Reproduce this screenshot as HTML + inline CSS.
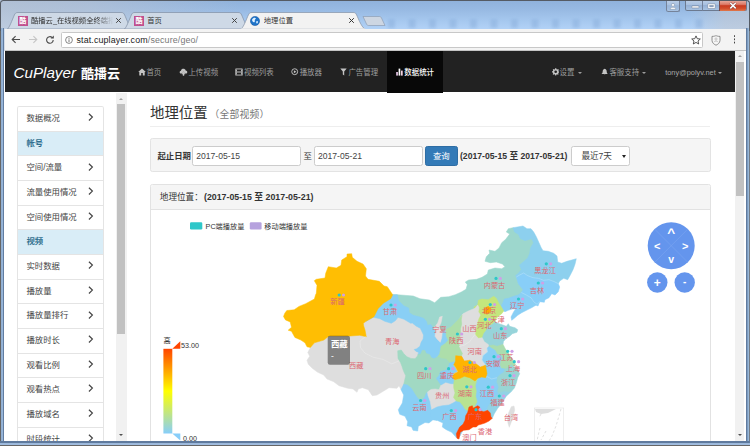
<!DOCTYPE html>
<html lang="zh-CN">
<head>
<meta charset="utf-8">
<title>地理位置</title>
<style>
*{box-sizing:border-box;margin:0;padding:0}
html,body{width:750px;height:446px;overflow:hidden;background:#fff}
body{font-family:"Liberation Sans","Noto Sans CJK SC",sans-serif;font-size:8.4px;color:#333;position:relative}
.abs{position:absolute}
#win{position:absolute;left:0;top:0;width:750px;height:446px;overflow:hidden;background:#fff}
#ftop{position:absolute;left:0;top:0;width:750px;height:51px;background:linear-gradient(180deg,#8fb1db 0px,#98bae3 10px,#a5c7ee 20px,#b1d1f6 28.5px,#9db9dc 29px,#8aa3c6 51px)}
#ftop:after{content:"";position:absolute;left:0;top:0;width:240px;height:29px;background:linear-gradient(90deg,rgba(196,200,208,.62) 0,rgba(196,200,208,.5) 90px,rgba(196,200,208,0) 240px)}
#ftop:before{content:"";position:absolute;right:0;top:0;width:60px;height:51px;background:linear-gradient(90deg,rgba(196,200,208,0) 0,rgba(196,200,208,.55) 35px,rgba(196,200,208,.6) 60px)}
#fl{position:absolute;left:0;top:28px;width:4.3px;height:418px;background:linear-gradient(90deg,#666 0,#666 .7px,#8faed2 1.2px,#97b5d8 2.5px,#627da1 3.1px,#5f7a9e 4.3px)}
#fr{position:absolute;left:745.7px;top:28px;width:4.3px;height:418px;background:linear-gradient(90deg,#5f7a9e 0,#627da1 1.2px,#8fb0d3 1.7px,#a0bfe0 3.2px,#666 3.6px,#666 4.3px)}
#fb{position:absolute;left:0;top:441.3px;width:750px;height:4.7px;background:linear-gradient(180deg,#5f7a9e 0,#5f7a9e 1.9px,#9ab7d9 2.3px,#a0bce0 3.5px,#666 3.8px,#666 4.7px)}
#win:before{content:"";position:absolute;left:0;top:0;right:0;height:30px;border:0.8px solid #555b64;border-bottom:none;border-radius:3.5px 3.5px 0 0;z-index:50;pointer-events:none}
/* tabs */
.tab{position:absolute;top:12px;height:17px}
.tab svg{position:absolute;left:0;top:0}
.tabt{position:absolute;top:15.5px;font-size:7.3px;color:#333;white-space:nowrap;line-height:10px;overflow:hidden}
.tabx{position:absolute;top:16.5px;width:7px;height:7px}
.fav{position:absolute;top:16px;width:9.5px;height:9.5px;background:#c0508e;color:#fff;font-size:7px;line-height:9.5px;text-align:center;overflow:hidden;font-weight:bold}
/* toolbar */
#toolbar{position:absolute;left:5px;top:28.5px;width:740.7px;box-shadow:-0.7px 0 0 #f3f3f3;height:22.5px;background:#f3f3f3;border-bottom:0.8px solid #c4c4c4}
#url{position:absolute;left:56px;top:3px;width:642.3px;height:16px;background:#fff;border:1px solid #c8c8c8;border-radius:1.5px}
#urlt{position:absolute;left:71.5px;top:5px;font-size:8.9px;line-height:12px;color:#222;white-space:nowrap;letter-spacing:0.13px}
#urlt span{color:#777}
/* page */
#page{position:absolute;left:5px;top:51px;width:740.7px;height:390.3px;background:#fff;box-shadow:-1px 0 0 #fff}
#pclip{position:absolute;left:-0.7px;top:0;width:741.4px;height:390.3px;overflow:hidden}
#pin{position:absolute;left:0.7px;top:0;width:740.7px;height:390.3px}
#nav{position:absolute;left:0;top:0.3px;width:730px;height:41.2px;background:#222}
#nav .act{position:absolute;left:382.3px;top:0;width:56px;height:42px;background:#080808}
.ni{position:absolute;top:15.3px;font-size:7.45px;line-height:12px;color:#9d9d9d;white-space:nowrap}
.ni.w{color:#fff;font-weight:500}
.nic{position:absolute;top:17px}
#logo{position:absolute;left:8.5px;top:9.5px;color:#fff;white-space:nowrap;line-height:24px}
#logo i{font-size:15.2px;font-style:italic;letter-spacing:0px}
#logo b{font-size:13px;margin-left:5px;font-weight:bold;position:relative;top:-0.3px}
/* scrollbars */
#vs{position:absolute;left:730px;top:0;width:9px;height:390.5px;background:#f1f1f1}
#vs .th{position:absolute;left:1.3px;top:10.8px;width:7.5px;height:134.5px;background:#c1c1c1}
#ss{position:absolute;left:111.3px;top:42px;width:10.6px;height:348.5px;background:#f1f1f1}
#ss .th{position:absolute;left:0.8px;top:11px;width:8.1px;height:229.8px;background:#c1c1c1}
.arr{position:absolute;width:0;height:0;border-left:2.5px solid transparent;border-right:2.5px solid transparent}
.arr.up{border-bottom:2.6px solid #a0a0a0}
.arr.dn{border-top:2.6px solid #505050}
/* sidebar */
#side{position:absolute;left:11.8px;top:55.2px;width:87.2px;border:0.6px solid #e4e4e4;border-bottom:none;border-radius:2.4px 2.4px 0 0;background:#fff}
#side div{height:24.65px;border-bottom:0.6px solid #e4e4e4;padding-left:8.6px;line-height:23.7px;font-size:8.4px;color:#444;position:relative;white-space:nowrap}
#side div.h{background:#d9edf7;color:#31708f;font-weight:bold}
#side div svg{position:absolute;left:70.6px;top:6.2px;width:5.5px;height:8.2px}
/* main */
#h3{position:absolute;left:145px;top:52.4px;font-size:14.4px;line-height:20px;color:#333;white-space:nowrap}
#h3 small{font-size:9.8px;color:#777;margin-left:2px;letter-spacing:0.2px}
#hr{position:absolute;left:145px;top:75px;width:560px;height:0.7px;background:#eee}
#well{position:absolute;left:145px;top:87.4px;width:560.6px;height:33.6px;background:#f5f5f5;border:0.6px solid #e3e3e3;border-radius:2.4px}
.inp{position:absolute;top:6.2px;height:20.4px;background:#fff;border:0.6px solid #ccc;border-radius:2.4px;font-size:8.6px;line-height:19.5px;padding-left:2.8px;color:#444;white-space:nowrap}
.lb{position:absolute;top:6.2px;line-height:20px;font-size:8.4px;white-space:nowrap}
#btn{position:absolute;left:273.8px;top:6.2px;width:33px;height:20.4px;background:#337ab7;border:0.6px solid #2e6da4;border-radius:2.4px;color:#fff;font-size:8.4px;line-height:19px;text-align:center}
#panel{position:absolute;left:145px;top:133px;width:560.6px;height:300px;border:0.6px solid #e2e2e2;border-radius:2.4px;background:#fff}
#ph{position:absolute;left:0;top:0;width:100%;height:24.6px;background:#f5f5f5;border-bottom:0.6px solid #e2e2e2;border-radius:2.4px 2.4px 0 0;padding-left:8.8px;line-height:24px;font-size:8.6px;white-space:nowrap}
#ph b{font-size:8.8px;margin-left:-1.2px}
#map{position:absolute;left:0;top:0}
</style>
</head>
<body>
<div id="win">
<div id="ftop"></div><div id="fl"></div><div id="fr"></div><div id="fb"></div>
<!-- window buttons -->
<div class="abs" style="left:663px;top:0;width:87px;height:12.5px;z-index:5">
 <div class="abs" style="left:2.7px;top:0;width:14px;height:11.6px;border:0.7px solid #75839a;border-top:none;border-radius:0 0 2.5px 2.5px;background:linear-gradient(#bccfe8,#a9c1e0 45%,#9ab5d8 52%,#a9c4e4)"></div>
 <svg class="abs" style="left:5.7px;top:2.6px" width="8" height="7" viewBox="0 0 8 7"><circle cx="4" cy="1.9" r="1.5" fill="#fff" stroke="#6a7890" stroke-width=".4"/><path d="M1.1 6.3c0-2.6 5.8-2.6 5.8 0z" fill="#fff" stroke="#6a7890" stroke-width=".4"/></svg>
 <div class="abs" style="left:22.3px;top:0;width:61.7px;height:11.3px;border:0.7px solid #6c7a90;border-top:none;border-radius:0 0 2.5px 2.5px;background:linear-gradient(#bccfe8,#a9c1e0 45%,#95b0d4 52%,#a7c2e2)"></div>
 <div class="abs" style="left:39px;top:0;width:0.7px;height:11px;background:#73819a"></div>
 <div class="abs" style="left:55.7px;top:0;width:27.8px;height:10.8px;border-left:0.7px solid #7a4a48;border-radius:0 0 2.5px 0;background:linear-gradient(#e9b3a8,#dc7a68 40%,#c93a20 52%,#d4502e 80%,#e07a4c)"></div>
 <svg class="abs" style="left:27.5px;top:5.4px" width="9" height="4" viewBox="0 0 9 4"><rect x=".9" y=".9" width="7" height="2" rx=".5" fill="#fff" stroke="#66748c" stroke-width=".5"/></svg>
 <svg class="abs" style="left:43.5px;top:2.8px" width="9" height="7" viewBox="0 0 9 7"><rect x=".8" y=".8" width="7.4" height="4.8" rx=".6" fill="#fff" stroke="#66748c" stroke-width=".5"/><rect x="2.8" y="2.4" width="3.4" height="1.5" fill="#8eaad0" stroke="#66748c" stroke-width=".4"/></svg>
 <svg class="abs" style="left:66px;top:2.4px" width="8" height="7.4" viewBox="0 0 8 7.4"><path d="M1.3 1l5.4 5.4M6.7 1L1.3 6.4" stroke="#6a3a38" stroke-width="2.3"/><path d="M1.3 1l5.4 5.4M6.7 1L1.3 6.4" stroke="#fff" stroke-width="1.5"/></svg>
</div>
<!-- blurred aero blobs -->
<div class="abs" style="left:380px;top:19px;width:330px;height:9px;opacity:.55;filter:blur(1.6px);background:repeating-linear-gradient(90deg,rgba(140,175,220,0) 0px,rgba(140,175,220,0) 7px,#8cb0dc 9px,#8cb0dc 14px,rgba(140,175,220,0) 16px,rgba(140,175,220,0) 20.5px)"></div>
<!-- tab 1 -->
<div class="tab" style="left:7px;width:126px"><svg width="126" height="17" viewBox="0 0 126 17"><path d="M0.5 17C3 15 6.5 4 8 1.8C8.8 0.8 9.5 0.5 11 0.5H114C115.5 0.5 116.3 0.8 117 1.8C118.5 4 122 15 125 17Z" fill="#ced9e6" stroke="#7f8ea3" stroke-width=".7"/></svg></div>
<div class="fav" style="left:18px">酷</div>
<div class="tabt" style="left:31px;width:82px;-webkit-mask-image:linear-gradient(90deg,#000 80%,transparent)">酷播云_在线视频全终端播放</div>
<svg class="tabx" style="left:115px" viewBox="0 0 7 7"><path d="M1.2 1.2l4.6 4.6M5.8 1.2L1.2 5.8" stroke="#444" stroke-width="1"/></svg>
<!-- tab 2 -->
<div class="tab" style="left:124px;width:126px"><svg width="126" height="17" viewBox="0 0 126 17"><path d="M0.5 17C3 15 6.5 4 8 1.8C8.8 0.8 9.5 0.5 11 0.5H114C115.5 0.5 116.3 0.8 117 1.8C118.5 4 122 15 125 17Z" fill="#ced9e6" stroke="#7f8ea3" stroke-width=".7"/></svg></div>
<div class="fav" style="left:134.3px">酷</div>
<div class="tabt" style="left:147.3px">首页</div>
<svg class="tabx" style="left:231px" viewBox="0 0 7 7"><path d="M1.2 1.2l4.6 4.6M5.8 1.2L1.2 5.8" stroke="#444" stroke-width="1"/></svg>
<!-- new tab btn -->
<svg class="abs" style="left:362px;top:15.5px" width="24" height="10" viewBox="0 0 24 10"><path d="M1 .5H17.5C18.5 .5 19 1 19.5 2L23 9.5H6.5C5.5 9.5 5 9 4.5 8Z" fill="#cdd6e2" stroke="#8e9db3" stroke-width=".7"/></svg>
<!-- tab 3 active -->
<div class="tab" style="left:240.5px;width:124px"><svg width="124" height="17" viewBox="0 0 124 17"><path d="M0 17C3 15 6.5 4 8 1.8C8.8 0.8 9.5 0.5 11 0.5H112C113.5 0.5 114.3 0.8 115 1.8C116.5 4 120 15 124 17Z" fill="#f2f2f2" stroke="#8492a6" stroke-width=".7"/><rect x="0" y="16.4" width="124" height="1" fill="#f2f2f2"/></svg></div>
<svg class="abs" style="left:250.3px;top:15.8px" width="10" height="10" viewBox="0 0 10 10"><circle cx="5" cy="5" r="4.6" fill="#1e73c8"/><circle cx="5" cy="5" r="4.6" fill="none" stroke="#0f4f9a" stroke-width=".5"/><path d="M2.2 3.2C3 1.6 5 1.2 6 2.2C5.2 3.4 4.6 3.8 4.8 5C5 6.2 4 6.6 3.2 6C2.4 5.4 1.8 4.4 2.2 3.2Z" fill="#dff0ff"/><path d="M6.4 5.2C7.4 4.6 8.4 5.4 8 6.6C7.6 7.6 6.6 7.8 6.2 7C6 6.4 6 5.6 6.4 5.2Z" fill="#bfe0ff"/></svg>
<div class="tabt" style="left:263.8px">地理位置</div>
<svg class="tabx" style="left:347.5px" viewBox="0 0 7 7"><path d="M1.2 1.2l4.6 4.6M5.8 1.2L1.2 5.8" stroke="#333" stroke-width="1"/></svg>

<div id="toolbar">
 <svg class="abs" style="left:5.8px;top:6.5px" width="10" height="9" viewBox="0 0 10 9"><path d="M9 4.5H1.4M4.6 1.1L1.2 4.5L4.6 7.9" fill="none" stroke="#4a4a4a" stroke-width="1.1"/></svg>
 <svg class="abs" style="left:23px;top:6.5px" width="10" height="9" viewBox="0 0 10 9"><path d="M1 4.5H8.6M5.4 1.1L8.8 4.5L5.4 7.9" fill="none" stroke="#c6c6c6" stroke-width="1.1"/></svg>
 <svg class="abs" style="left:39.5px;top:6px" width="10" height="10" viewBox="0 0 10 10"><path d="M8.2 5A3.3 3.3 0 1 1 7.2 2.6" fill="none" stroke="#4a4a4a" stroke-width="1.1"/><path d="M5.6 3.6H8.8V0.6Z" fill="#4a4a4a"/></svg>
 <div id="url"></div>
 <svg class="abs" style="left:59.5px;top:7px" width="8" height="8" viewBox="0 0 8 8"><circle cx="4" cy="4" r="3.4" fill="none" stroke="#555" stroke-width=".7"/><path d="M4 3.4V6M4 2V2.8" stroke="#555" stroke-width=".8"/></svg>
 <div id="urlt">stat.cuplayer.com<span>/secure/geo/</span></div>
 <svg class="abs" style="left:685.7px;top:6px" width="10" height="10" viewBox="0 0 10 10"><path d="M5 .9L6.25 3.7L9.3 4L7 6L7.7 9L5 7.4L2.3 9L3 6L.7 4L3.75 3.7Z" fill="none" stroke="#444" stroke-width=".9" stroke-linejoin="round"/></svg>
 <svg class="abs" style="left:705.7px;top:6px" width="10" height="11" viewBox="0 0 10 11"><path d="M1 1.4C3.5 1.4 4.5 .8 5 .6C5.5 .8 6.5 1.4 9 1.4V5.4C9 8 6.5 9.6 5 10.2C3.5 9.6 1 8 1 5.4Z" fill="#f6f6f6" stroke="#777" stroke-width=".8"/><circle cx="5" cy="4" r="1.1" fill="none" stroke="#999" stroke-width=".5"/><path d="M3 7.2C3.4 5.6 6.6 5.6 7 7.2" fill="none" stroke="#999" stroke-width=".5"/></svg>
 <div class="abs" style="left:728.7px;top:6.5px;width:1.6px;height:1.6px;background:#444;border-radius:50%;box-shadow:0 3.3px 0 #444,0 6.6px 0 #444"></div>
</div>

<div id="page"><div id="pclip"><div id="pin">
<div id="nav">
 <div class="act"></div>
 <div id="logo"><i>CuPlayer</i><b>酷播云</b></div>
 <svg class="nic" style="left:133px;top:16.8px" width="8" height="8" viewBox="0 0 8 8"><path d="M4 .6L.2 4H1.3V7.4H3.2V5H4.8V7.4H6.7V4H7.8Z" fill="#c4c4c4"/></svg>
 <div class="ni" style="left:141.4px">首页</div>
 <svg class="nic" style="left:173.5px;top:16.8px" width="9" height="8" viewBox="0 0 9 8"><path d="M2.2 5.6C.2 5.6 .2 3 2 2.8C2.2 .4 6 .2 6.6 2.4C8.8 2.4 8.8 5.6 6.8 5.6H5.6L4.5 3.4L3.4 5.6Z" fill="#c4c4c4"/><path d="M4.5 3.6L2.6 6.2H3.8V7.8H5.2V6.2H6.4Z" fill="#c4c4c4"/></svg>
 <div class="ni" style="left:183.4px">上传视频</div>
 <svg class="nic" style="left:229.7px;top:17px" width="8" height="8" viewBox="0 0 8 8"><rect x=".3" y=".5" width="7.4" height="7" rx=".6" fill="#c4c4c4"/><rect x="2" y="1.4" width="4" height="2.1" fill="#222"/><rect x="2" y="4.5" width="4" height="2.1" fill="#222"/><rect x=".9" y="1.3" width=".6" height=".9" fill="#222"/><rect x=".9" y="3.5" width=".6" height=".9" fill="#222"/><rect x=".9" y="5.7" width=".6" height=".9" fill="#222"/><rect x="6.5" y="1.3" width=".6" height=".9" fill="#222"/><rect x="6.5" y="3.5" width=".6" height=".9" fill="#222"/><rect x="6.5" y="5.7" width=".6" height=".9" fill="#222"/></svg>
 <div class="ni" style="left:239px">视频列表</div>
 <svg class="nic" style="left:286.2px;top:17.2px" width="7.4" height="7.4" viewBox="0 0 8 8"><circle cx="4" cy="4" r="3.2" fill="none" stroke="#c4c4c4" stroke-width="1"/><path d="M3.1 2.4L5.8 4L3.1 5.6Z" fill="#c4c4c4"/></svg>
 <div class="ni" style="left:294.7px">播放器</div>
 <svg class="nic" style="left:335.3px;top:17px" width="7" height="8" viewBox="0 0 7 8"><path d="M.3 .5H6.7L4.2 3.6V7.6L2.8 6.6V3.6Z" fill="#c4c4c4"/></svg>
 <div class="ni" style="left:343.4px">广告管理</div>
 <svg class="nic" style="left:391.3px;top:17px" width="7" height="8" viewBox="0 0 7 8"><rect x=".2" y="4" width="1.7" height="3.6" fill="#e8c8e8"/><rect x="2.6" y=".6" width="1.7" height="7" fill="#fff"/><rect x="5" y="2.6" width="1.7" height="5" fill="#f4d0e0"/></svg>
 <div class="ni w" style="left:399.3px">数据统计</div>
 <svg class="nic" style="left:546.6px;top:17px" width="7.4" height="7.4" viewBox="0 0 10 10"><path d="M4.2 .3H5.8L6.1 1.6L7.1 2.1L8.3 1.4L9.3 2.6L8.6 3.7L8.9 4.6L10 5V6L8.9 6.3L8.4 7.3L9 8.4L7.9 9.3L6.9 8.6L6 8.9L5.6 10H4.4L4 8.9L3.1 8.6L2 9.3L.9 8.3L1.6 7.2L1.2 6.3L0 5.9V4.6L1.2 4.2L1.6 3.4L1 2.3L2.1 1.3L3.1 2L3.9 1.6Z" fill="#c4c4c4"/><circle cx="5" cy="5.1" r="1.8" fill="#222"/></svg>
 <div class="ni" style="left:554.6px">设置</div>
 <div class="arr dn" style="left:572.9px;top:20.6px;border-top-color:#9d9d9d;border-width:2.4px 2.2px 0 2.2px"></div>
 <svg class="nic" style="left:595.8px;top:16.8px" width="7.4" height="8" viewBox="0 0 8 8"><path d="M4 .4C5.8 .8 6.2 2.2 6.2 3.6C6.2 5 7 5.6 7.7 6.2H.3C1 5.6 1.8 5 1.8 3.6C1.8 2.2 2.2 .8 4 .4Z" fill="#c4c4c4"/><path d="M3.2 6.6A.9 .9 0 0 0 4.8 6.6Z" fill="#c4c4c4"/></svg>
 <div class="ni" style="left:604.4px">客服支持</div>
 <div class="arr dn" style="left:637.2px;top:20.6px;border-top-color:#9d9d9d;border-width:2.4px 2.2px 0 2.2px"></div>
 <div class="ni" style="left:660.2px;font-size:7.4px;color:#a8a8a8">tony@polyv.net</div>
 <div class="arr dn" style="left:713px;top:20.6px;border-top-color:#9d9d9d;border-width:2.4px 2.2px 0 2.2px"></div>
</div>
<div id="vs"><div class="arr up" style="left:3px;top:4px"></div><div class="th"></div><div class="arr dn" style="left:3px;top:383px"></div></div>
<div id="ss"><div class="arr up" style="left:2.4px;top:5px"></div><div class="th"></div><div class="arr dn" style="left:2.4px;top:340.5px"></div></div>
<div id="side">
 <div>数据概况<svg width="6" height="9" viewBox="0 0 6 9"><path d="M1 .8L4.8 4.5L1 8.2" fill="none" stroke="#444" stroke-width="1.3"/></svg></div>
 <div class="h">帐号</div>
 <div>空间/流量<svg width="6" height="9" viewBox="0 0 6 9"><path d="M1 .8L4.8 4.5L1 8.2" fill="none" stroke="#444" stroke-width="1.3"/></svg></div>
 <div>流量使用情况<svg width="6" height="9" viewBox="0 0 6 9"><path d="M1 .8L4.8 4.5L1 8.2" fill="none" stroke="#444" stroke-width="1.3"/></svg></div>
 <div>空间使用情况<svg width="6" height="9" viewBox="0 0 6 9"><path d="M1 .8L4.8 4.5L1 8.2" fill="none" stroke="#444" stroke-width="1.3"/></svg></div>
 <div class="h">视频</div>
 <div>实时数据<svg width="6" height="9" viewBox="0 0 6 9"><path d="M1 .8L4.8 4.5L1 8.2" fill="none" stroke="#444" stroke-width="1.3"/></svg></div>
 <div>播放量<svg width="6" height="9" viewBox="0 0 6 9"><path d="M1 .8L4.8 4.5L1 8.2" fill="none" stroke="#444" stroke-width="1.3"/></svg></div>
 <div>播放量排行<svg width="6" height="9" viewBox="0 0 6 9"><path d="M1 .8L4.8 4.5L1 8.2" fill="none" stroke="#444" stroke-width="1.3"/></svg></div>
 <div>播放时长<svg width="6" height="9" viewBox="0 0 6 9"><path d="M1 .8L4.8 4.5L1 8.2" fill="none" stroke="#444" stroke-width="1.3"/></svg></div>
 <div>观看比例<svg width="6" height="9" viewBox="0 0 6 9"><path d="M1 .8L4.8 4.5L1 8.2" fill="none" stroke="#444" stroke-width="1.3"/></svg></div>
 <div>观看热点<svg width="6" height="9" viewBox="0 0 6 9"><path d="M1 .8L4.8 4.5L1 8.2" fill="none" stroke="#444" stroke-width="1.3"/></svg></div>
 <div>播放域名<svg width="6" height="9" viewBox="0 0 6 9"><path d="M1 .8L4.8 4.5L1 8.2" fill="none" stroke="#444" stroke-width="1.3"/></svg></div>
 <div>时段统计<svg width="6" height="9" viewBox="0 0 6 9"><path d="M1 .8L4.8 4.5L1 8.2" fill="none" stroke="#444" stroke-width="1.3"/></svg></div>
</div>
<div id="h3">地理位置<small>（全部视频）</small></div>
<div id="hr"></div>
<div id="well">
 <div class="lb" style="left:6.4px;font-weight:bold">起止日期</div>
 <div class="inp" style="left:41.4px;width:108.6px">2017-05-15</div>
 <div class="lb" style="left:152.6px">至</div>
 <div class="inp" style="left:163.2px;width:109px">2017-05-21</div>
 <div id="btn">查询</div>
 <div class="lb" style="left:309px;font-weight:bold;font-size:8.65px">(2017-05-15 至 2017-05-21)</div>
 <div class="inp" style="left:420.4px;width:58.5px;padding-left:9px">最近7天<div class="arr dn" style="left:49.4px;top:8px;border-top-color:#222;border-width:3.4px 2.1px 0 2.1px"></div></div>
</div>
<div id="panel">
 <div id="ph">地理位置： <b>(2017-05-15 至 2017-05-21)</b></div>
</div>
<svg id="map" class="abs" style="left:-5px;top:-51px" width="750" height="446" viewBox="0 0 750 446" font-family="Liberation Sans,Noto Sans CJK SC,sans-serif">
<!-- legend -->
<rect x="190" y="222.2" width="12.3" height="7.2" rx="1.2" fill="#2ec7c9"/>
<text x="205.6" y="228.6" font-size="7.2" fill="#333">PC端播放量</text>
<rect x="249.8" y="222.2" width="11.8" height="7.2" rx="1.2" fill="#b6a2de"/>
<text x="264.3" y="228.6" font-size="7.2" fill="#333">移动端播放量</text>
<!-- data range -->
<defs><linearGradient id="dr" x1="0" y1="0" x2="0" y2="1"><stop offset="0" stop-color="#ff4500"/><stop offset=".5" stop-color="#ffff00"/><stop offset="1" stop-color="#87cefa"/></linearGradient></defs>
<rect x="163.4" y="348.8" width="8.9" height="84.7" fill="url(#dr)"/>
<path d="M172.3 348.8H180.3V341.3Z" fill="#ff4500"/>
<path d="M172.3 433.5H180.3V440.5Z" fill="#87cefa"/>
<text x="163.6" y="343.4" font-size="7.2" fill="#333">高</text>
<text x="181" y="348" font-size="7.2" fill="#333">53.00</text>
<text x="183" y="441" font-size="7.2" fill="#333">0.00</text>
<!-- roam controller -->
<circle cx="671.2" cy="245.7" r="23.5" fill="#6495ed"/>
<path d="M654.6 229.1L687.8 262.3M687.8 229.1L654.6 262.3" stroke="#7aa4f0" stroke-width=".6"/>
<g font-size="11" font-weight="bold" fill="#fff" text-anchor="middle"><text x="671.2" y="237" font-size="13.5">^</text><text x="671.2" y="262.6" font-size="10.5">v</text><text x="657.3" y="249.6">&lt;</text><text x="685.1" y="249.6">&gt;</text></g>
<circle cx="657.3" cy="282.5" r="10.2" fill="#6495ed"/>
<circle cx="684.7" cy="282.5" r="10.2" fill="#6495ed"/>
<g font-size="10" font-weight="bold" fill="#fff" text-anchor="middle"><text x="657.3" y="286.6" font-size="12">+</text><text x="684.7" y="285.4">-</text></g>
<g stroke-linejoin="round">
<path d="M392.7 294.7L397.3 294.7L413.3 296L420 298.7L429.3 300L434.7 302.7L440.7 297.3L448.7 296.7L455.3 294.7L461.3 292L466 289.3L467.3 284.7L465.3 282L468.7 280L476.7 279.3L482 277.3L487.3 274L488.3 270L495 268L501.7 268.7L505 266.7L502.3 264L496.3 262L490.3 262.7L485 261.3L486.3 256.7L489.7 253.3L489 250L495 251.3L499 248L501.7 242.7L505.7 239.3L509.7 234L506.3 232L508.3 228.7L513 227.7L520 232L535 240L535 260L525 280L528 297L515 305L506 307L490 312L470 325L450 335L440 335L432 330L410 318L400 310L395 300Z" fill="#9dd7cd" stroke="#9dd7cd" stroke-width=".5"/>
<path d="M310.4 347.5L308.3 351.5L307.7 352.3L309.7 356.3L307 360.3L308.3 364.3L312.3 368.3L317.7 372.3L323.7 375L327 379L333.7 381.7L339 385.7L347.7 388.3L353 389L357 392.3L358.3 389L362.3 387.7L368.3 389.7L372.3 395.7L377 395L383.7 391L389 387.7L397 388.3L399 385.7L401 389.7L406 388L408 380L408 368L406 361L410 361L418 360L424 352L426 340L427 332L424 324L416 320.5L408 317L401 313L395 316L388 319L380 315L374 316L366 318L360 322L360 330L340 330L320 336Z" fill="#dedede" stroke="#dedede" stroke-width=".5"/>
<path d="M392.7 294.7L397.3 294.7L398.7 300.7L404 306L408.7 308L409.3 312.7L413.3 315.3L420 317L424 318.5L426.5 321.5L427.5 325.3L430.7 324.5L433.7 328.3L438 328L441 331.5L442.3 332.3L445.7 329.7L449 332L450 340L446 346L443 355L440 360L435 361L425 357L420 356L417.9 354.4L418.7 352.4L415.8 351.2L414.2 349.5L416.7 348.7L419.9 346.3L421.1 342.3L423.1 339L423.5 335L420.3 328.3L416 326L412.3 323L410.7 323.3L404 319.3L398 317.3L395.3 320.7L391.3 323.3L384.7 321.3L380 318.7L373.3 317.3L366 321.3L366 316L372 308L380 300L388 294Z" fill="#89cff5" stroke="#89cff5" stroke-width=".5"/>
<path d="M283.5 316.5L284.8 313.2L286.8 310.5L294.2 309.8L299 306.4L305.7 303.7L314.4 299L315.5 295L316.3 293.3L317 285.3L314.3 280.7L316.3 279.3L325 278L325.7 273.3L328.3 266.7L336.3 268L341 265.3L341.7 260L347 256.7L347 254L351.7 253.7L352.3 257.3L357 261.3L363 264L366.3 268.7L365.5 276L368 279.3L379.3 281.3L384 286L387.3 286.7L392.7 294.7L390.7 298.7L383.3 303.3L378 308.7L374 316.7L366 321.3L363.3 323.3L363.7 326L365 330L366.3 336.7L359.7 335.3L350.3 336L329 336L323.8 340.1L314.4 342.8L310.4 347.5L307 346.8L305 342.8L300.9 340.1L294.9 337.4L291.5 331.3L288.2 330.2L291.5 327.3L290.2 321.9L285.5 319.9Z" fill="#ffbe03" stroke="#ffbe03" stroke-width=".5"/>
<path d="M513 227.7L523 226L527 228.7L531 228.7L533.7 232L536.3 236.7L539 242.7L541 247.3L543 250.7L548.3 251.3L553.7 253.3L557 256L557.7 262L561.7 263.3L567 261.3L571.7 260L576.3 258.7L575 264.3L573 269.7L570.3 275L567.7 279.7L563.7 278.3L559.7 281L558.3 283.7L556 288L540 287L528 283L521 281L516.3 277L515.5 275.5L519 272.7L521.3 269.5L519.5 265L523.5 261.7L527.7 258L529.7 253.3L530.5 248L533.5 242.7L531.7 238.7L525 240.7L520.3 238.5L518.5 234.5L514.5 232Z" fill="#8dd0ee" stroke="#8dd0ee" stroke-width=".5"/>
<path d="M516.3 277L519.7 275L523.7 273L527.7 275.7L533 277.7L538.3 278.3L543.7 280.3L549 279.7L554.3 281.7L558.3 283.7L559.7 287L558.3 291.7L555 295L551.7 293.7L549 297.7L545 299.7L544.3 302.3L539.7 301.7L538 306L531 303L525 299L522 295.5L521.3 292.5L523 289.7L518.3 283.7Z" fill="#88cef8" stroke="#88cef8" stroke-width=".5"/>
<path d="M521.3 292.5L526.3 295L531 297.7L533.7 301.7L537 304.3L539.7 301.7L537 304.5L532 307.5L527 310L521.7 312.7L517.7 315.3L514.3 318.3L511.7 320.3L511 317L513.7 311.7L515.7 309L512.3 309L508.3 310.3L505 311.7L503.7 311L500 310L499 306L501 306.3L503 302.3L504.3 299L508.3 298.3L513.7 296.3L518.3 295Z" fill="#89cff5" stroke="#89cff5" stroke-width=".5"/>
<path d="M477.7 305L478.3 300.3L481.7 299L488.3 299.7L493.7 296.3L496.3 298.3L499 303.7L501 306.3L503.7 311L501.7 313.7L499 315.7L496.3 318.3L495 321.7L497 326L492 332L488 338L484 341L478 342L472 336L472 325L475 312L474 307Z" fill="#c3e67d" stroke="#c3e67d" stroke-width=".5"/>
<path d="M484.3 308.3L488.3 306.3L491 308.3L490.3 312.3L487 314.3L483.7 313Z" fill="#ffa800" stroke="#ffa800" stroke-width=".5"/>
<path d="M495 321.7L492.3 324.3L488.3 326.3L486.3 330.3L483.7 333.7L482.3 337.7L480 340L482 346L490 349L498 349L503 344.3L503.5 341.5L506 338.5L509.7 336.3L512.3 333.7L517 332.3L517.7 329.7L515 327.7L509.7 326.3L508.3 323.7L506.3 326.3L503 325L499 323.7Z" fill="#97d4da" stroke="#97d4da" stroke-width=".5"/>
<path d="M462 315L463 313.7L468.3 311L475 308.3L477.7 305L479 307.7L478.3 311.7L480.3 315L478.3 319L477 323.7L475.7 329L475 334.5L474 340L466 347L460 348L457 345L458 335L459 325L460 318Z" fill="#dedede" stroke="#dedede" stroke-width=".5"/>
<path d="M439.7 317L442.3 316.3L441 323L439 327L442.3 332.3L441.7 337.7L440.3 342.3L437 339L435 336.3L435.7 331L433.7 328.3L437.7 323Z" fill="#e4dede" stroke="#e4dede" stroke-width=".5"/>
<path d="M445.7 329.7L451 327L455 323L459 319L462 315L461.3 320L461.7 324L460.5 329L460.7 334L458.5 342L459.5 346.5L460.3 348.3L465 352L465 358L462 362L456 366L450 366L444 362L438 360L437.7 356.8L439.7 353.7L441 346.3L445 343.7L448.3 340.3L446.3 336.3Z" fill="#addeaa" stroke="#addeaa" stroke-width=".5"/>
<path d="M459.5 346.5L464.3 345L469.7 341.7L472.3 338L475 334.5L478.3 338.3L482.3 337.7L484.3 341.7L488.3 344.5L490 350L489 356L487 362L488 368L482 370L475 366L468 363L463 360L461.7 356.3L463 353.7L460.3 348.3Z" fill="#dedede" stroke="#dedede" stroke-width=".5"/>
<path d="M489 345.7L493 345L497 346.3L503 344.3L505 348.3L507.7 352.3L510.3 356.3L513 360.3L514.3 362.3L515.7 365L513 366.3L510 370L503 371L498 368L497 360L498 356L493 352L489 350Z" fill="#abddaf" stroke="#abddaf" stroke-width=".5"/>
<path d="M487 348.3L489 346.5L491.7 348.3L495 350.3L497 354.3L500.3 355L502.3 358.3L500.3 361L499.7 365L501 368.3L505 369L506 374L502 378L496 381L490 381L485 378L482 374L482 368L485.5 365L482 360L483 355.5L487.5 352Z" fill="#89cff5" stroke="#89cff5" stroke-width=".5"/>
<path d="M403.7 384.3L405.7 375.7L403.3 370.5L402 366.5L400.5 362.5L398 358.4L397.7 350.8L401.3 350L403.7 353.6L407 356.8L411 358.4L415 358.8L417.5 356L417.9 354.4L420.7 354L422.3 350.3L424.7 350.3L426.3 353.6L429.6 354.4L431.2 357.6L434 358.8L437.7 356.8L441.7 358.4L446.5 359.2L449.7 363L452 368L448 376L444 384L442 392L432 394L428 402L418 402L410 392L405 390Z" fill="#a1d9c3" stroke="#a1d9c3" stroke-width=".5"/>
<path d="M401 389.7L403.7 384.3L407.5 385L411.5 388.5L414.5 393.5L417.5 398L420.5 400.5L424.5 397.7L426.3 393L427.5 392L431 395L434 400L436 408L440 415L437 420.3L433 419.7L429 423L425 422.5L418.3 426.3L417.7 431L413 430.3L411.7 427L407 425.7L407.7 421.7L405 416.3L399.7 414.3L398.3 409.7L402.3 403L403.7 395Z" fill="#89cff5" stroke="#89cff5" stroke-width=".5"/>
<path d="M427.5 392L431 389.5L435 389L439 389.7L441 385L446 380L452 381L457 385L458 395L457 402L455 406L445 408L437 410L431.7 409.7L430.3 401.7L428 395.5Z" fill="#dedede" stroke="#dedede" stroke-width=".5"/>
<path d="M449.7 363L448.3 367L445.7 370.3L440.3 371.7L439 375.7L436.3 378.3L439 382.3L441 385L445.7 382.3L451 383.7L453.7 383.7L456 382L457 377L460 371L457 365L455 361.5Z" fill="#89cff5" stroke="#89cff5" stroke-width=".5"/>
<path d="M505 369L509 367L511.5 364.5L513 366.3L517 368.3L519.7 373.7L517.7 377.7L516.3 383L514.3 388.3L512 390.5L509 393.5L503 397L494 394L494 382L497 377.7L499.7 375L503.7 372.3Z" fill="#99d5d4" stroke="#99d5d4" stroke-width=".5"/>
<path d="M498.3 393.7L504 391.5L509 392.5L512 390.5L510.3 392.3L506.3 396.3L503.7 400.3L501 404.3L497.7 408.3L494.3 413.7L492.3 418.3L488 416L486 408L486 400L490 394L494 392Z" fill="#91d2e6" stroke="#91d2e6" stroke-width=".5"/>
<path d="M485.7 377.7L487 376.5L491.7 379L497 377.7L496.3 381.7L498.3 387L497 391L498.3 393.7L495 396L492 399.5L490 403L487.5 406L486.5 410.5L482 413L478 409L474 406L473 396L474 386L475 380L480 376Z" fill="#89cff5" stroke="#89cff5" stroke-width=".5"/>
<path d="M431.7 409.7L437 407L442.3 405.7L449 405L453 403L456.3 401L460 399L465 404L470 410L468 420L464 428L460 436L457 438.3L451.7 432.3L446.3 429.7L442.3 427L443 423L437 420.3L433 419.7L430 416Z" fill="#89cff5" stroke="#89cff5" stroke-width=".5"/>
<path d="M454.3 379.7L453.7 383.7L453.7 387.7L455 393L453.5 397.5L456.3 401L459.7 401.7L463 405.7L465 409L468 411L474 409L475 405.7L477 401.7L475.7 396.3L476.3 391L475.3 386L476.3 382L477.7 378.3L476 374L462 373L455 376Z" fill="#b9e391" stroke="#b9e391" stroke-width=".5"/>
<path d="M455.7 355.7L461.7 356.3L464.3 361L469.7 360.3L475 363L480.3 367L485.5 365.3L487 373.7L485.7 377.7L481.7 377L477.7 378.3L475 381L469.7 377.7L464.3 376.3L460.3 378.3L454.3 379.7L452.3 377L453.7 373.7L457.7 371.7L455.7 367.7L453.7 365L455.5 361Z" fill="#ffb400" stroke="#ffb400" stroke-width=".5"/>
<path d="M469 407L472.3 405.7L473 408.3L477.7 405.7L479.7 407L479 410.3L483.7 411.7L487.7 410.3L490.3 413L491 417L492.3 418.3L489 421L485 423L481 424.3L478.3 425L476.3 427L473 427L469 429.7L463.7 430.3L460.3 432.3L459 439L457 438.3L456.3 433.7L458.3 429.7L459.7 427L463 424.3L465 420.3L465.7 415.7L467.7 412.3Z" fill="#ff4500" stroke="#ff4500" stroke-width=".5"/>
<path d="M511.3 406.7L514 406L514.7 410L513.3 415.3L511.3 422L509.3 427.3L508 423.3L507.3 418L508.7 412.7Z" fill="#dedede" stroke="#dedede" stroke-width=".5"/>
</g>
<g fill="none" stroke="#fff" stroke-opacity=".45" stroke-width=".5">
<path d="M516.3 277L519.7 275L523.7 273L527.7 275.7L533 277.7L538.3 278.3L543.7 280.3L549 279.7L554.3 281.7L558.3 283.7"/>
<path d="M521.3 292.5L526.3 295L531 297.7L533.7 301.7L537 304.3L539.7 301.7"/>
<path d="M366.4 335.8L360 341L360.5 347.6L364.8 353L373.4 357.3L383 359.4L391.7 363.8L399 361"/>
<path d="M485.7 377.7L487 376.5L491.7 379L497 377.7"/>
<path d="M485.5 365L482 360L483 355.5L487.5 352L487 348.3"/>
<path d="M459.5 346.5L464.3 345L469.7 341.7L472.3 338L475 334.5"/>
<path d="M454.3 379.7L452.3 377L453.7 373.7L457.7 371.7L455.7 367.7L453.7 365"/>
</g>
<g><rect x="534.4" y="408" width="29.3" height="34" fill="#fff" stroke="#e3e3e3" stroke-width=".6"/><path d="M535 409H556L548 413L541 414L536 412Z" fill="#dedede"/><path d="M541 414L539 418M561 409L559 416L556 426L552 436L549 441M540 428L538 436L537 441M546 431L541 440" stroke="#dcdcdc" stroke-width=".9" stroke-dasharray="2.5 2" fill="none"/></g>
<g font-size="7.2" fill="#dc6872">
<text x="330.3" y="303.8">新疆</text>
<text x="349" y="367.9">西藏</text>
<text x="385" y="343.9">青海</text>
<text x="382.7" y="314.3">甘肃</text>
<text x="483.7" y="287.6">内蒙古</text>
<text x="534.3" y="272.8">黑龙江</text>
<text x="529.7" y="292.6">吉林</text>
<text x="510" y="307.8">辽宁</text>
<text x="481.7" y="313.3">北京</text>
<text x="490.3" y="321.9">天津</text>
<text x="477" y="328.3">河北</text>
<text x="462.3" y="330.9">山西</text>
<text x="493" y="337.9">山东</text>
<text x="432.3" y="332.3">宁夏</text>
<text x="449" y="342.9">陕西</text>
<text x="467.5" y="354.3">河南</text>
<text x="499" y="360.3">江苏</text>
<text x="485.7" y="366">安徽</text>
<text x="505.7" y="370.9">上海</text>
<text x="462.3" y="371.9">湖北</text>
<text x="417" y="377.6">四川</text>
<text x="439.7" y="377.6">重庆</text>
<text x="501" y="384.9">浙江</text>
<text x="457.7" y="396">湖南</text>
<text x="479.7" y="396.3">江西</text>
<text x="435" y="398.1">贵州</text>
<text x="490.3" y="404.9">福建</text>
<text x="412.3" y="409.6">云南</text>
<text x="442.3" y="419.3">广西</text>
<text x="467.7" y="419.3">广东</text>
<text x="503.7" y="419.9">台湾</text>
<text x="477.7" y="433.9">香港</text>
<text x="462.3" y="439.9">澳门</text>
</g>
<g>
<circle cx="339.2" cy="295" r="1.6" fill="#2ec7c9"/><circle cx="343.5" cy="295" r="1.6" fill="#cfa0e6"/>
<circle cx="391" cy="305" r="1.6" fill="#2ec7c9"/><circle cx="395.3" cy="305" r="1.6" fill="#cfa0e6"/>
<circle cx="496" cy="278.4" r="1.6" fill="#2ec7c9"/><circle cx="500.3" cy="278.4" r="1.6" fill="#cfa0e6"/>
<circle cx="546.3" cy="263.8" r="1.6" fill="#2ec7c9"/><circle cx="550.6" cy="263.8" r="1.6" fill="#cfa0e6"/>
<circle cx="538.3" cy="283" r="1.6" fill="#2ec7c9"/><circle cx="542.6" cy="283" r="1.6" fill="#cfa0e6"/>
<circle cx="518.5" cy="299" r="1.6" fill="#2ec7c9"/><circle cx="522.7" cy="299" r="1.6" fill="#cfa0e6"/>
<circle cx="490.3" cy="304.6" r="1.6" fill="#2ec7c9"/><circle cx="494.6" cy="304.6" r="1.6" fill="#cfa0e6"/>
<circle cx="485.4" cy="319.3" r="1.6" fill="#2ec7c9"/><circle cx="489.6" cy="319.3" r="1.6" fill="#cfa0e6"/>
<circle cx="501.3" cy="328.7" r="1.6" fill="#2ec7c9"/><circle cx="505.4" cy="328.7" r="1.6" fill="#cfa0e6"/>
<circle cx="457.4" cy="334" r="1.6" fill="#2ec7c9"/><circle cx="461.7" cy="334" r="1.6" fill="#cfa0e6"/>
<circle cx="507.7" cy="351.3" r="1.6" fill="#2ec7c9"/><circle cx="512" cy="351.3" r="1.6" fill="#cfa0e6"/>
<circle cx="494" cy="356.7" r="1.6" fill="#2ec7c9"/><circle cx="498.3" cy="356.7" r="1.6" fill="#cfa0e6"/>
<circle cx="514.3" cy="361.7" r="1.6" fill="#2ec7c9"/><circle cx="518.6" cy="361.7" r="1.6" fill="#cfa0e6"/>
<circle cx="470" cy="362.5" r="1.6" fill="#2ec7c9"/><circle cx="474.4" cy="362.5" r="1.6" fill="#cfa0e6"/>
<circle cx="425.7" cy="368.7" r="1.6" fill="#2ec7c9"/><circle cx="430" cy="368.7" r="1.6" fill="#cfa0e6"/>
<circle cx="448.6" cy="368.7" r="1.6" fill="#2ec7c9"/><circle cx="452.9" cy="368.7" r="1.6" fill="#cfa0e6"/>
<circle cx="510" cy="375.7" r="1.6" fill="#2ec7c9"/><circle cx="514" cy="375.7" r="1.6" fill="#cfa0e6"/>
<circle cx="466.8" cy="386.8" r="1.6" fill="#2ec7c9"/><circle cx="471" cy="386.8" r="1.6" fill="#cfa0e6"/>
<circle cx="488.3" cy="387.2" r="1.6" fill="#2ec7c9"/><circle cx="492.6" cy="387.2" r="1.6" fill="#cfa0e6"/>
<circle cx="499.3" cy="396" r="1.6" fill="#2ec7c9"/><circle cx="503.7" cy="396" r="1.6" fill="#cfa0e6"/>
<circle cx="420.6" cy="400.5" r="1.6" fill="#2ec7c9"/><circle cx="424.7" cy="400.5" r="1.6" fill="#cfa0e6"/>
<circle cx="451.3" cy="410.6" r="1.6" fill="#2ec7c9"/><circle cx="455.7" cy="410.6" r="1.6" fill="#cfa0e6"/>
<circle cx="476" cy="409.7" r="1.6" fill="#2ec7c9"/><circle cx="480" cy="409.7" r="1.6" fill="#cfa0e6"/>
</g>
<rect x="327.7" y="335.7" width="22.3" height="29" rx="2.2" fill="#000" fill-opacity=".42"/>
<text x="331" y="347.2" font-size="8.4" font-weight="bold" fill="#fff">西藏</text>
<text x="331" y="358.6" font-size="8.4" fill="#fff">-</text>
</svg>

</div></div></div>
</div>
</body>
</html>
